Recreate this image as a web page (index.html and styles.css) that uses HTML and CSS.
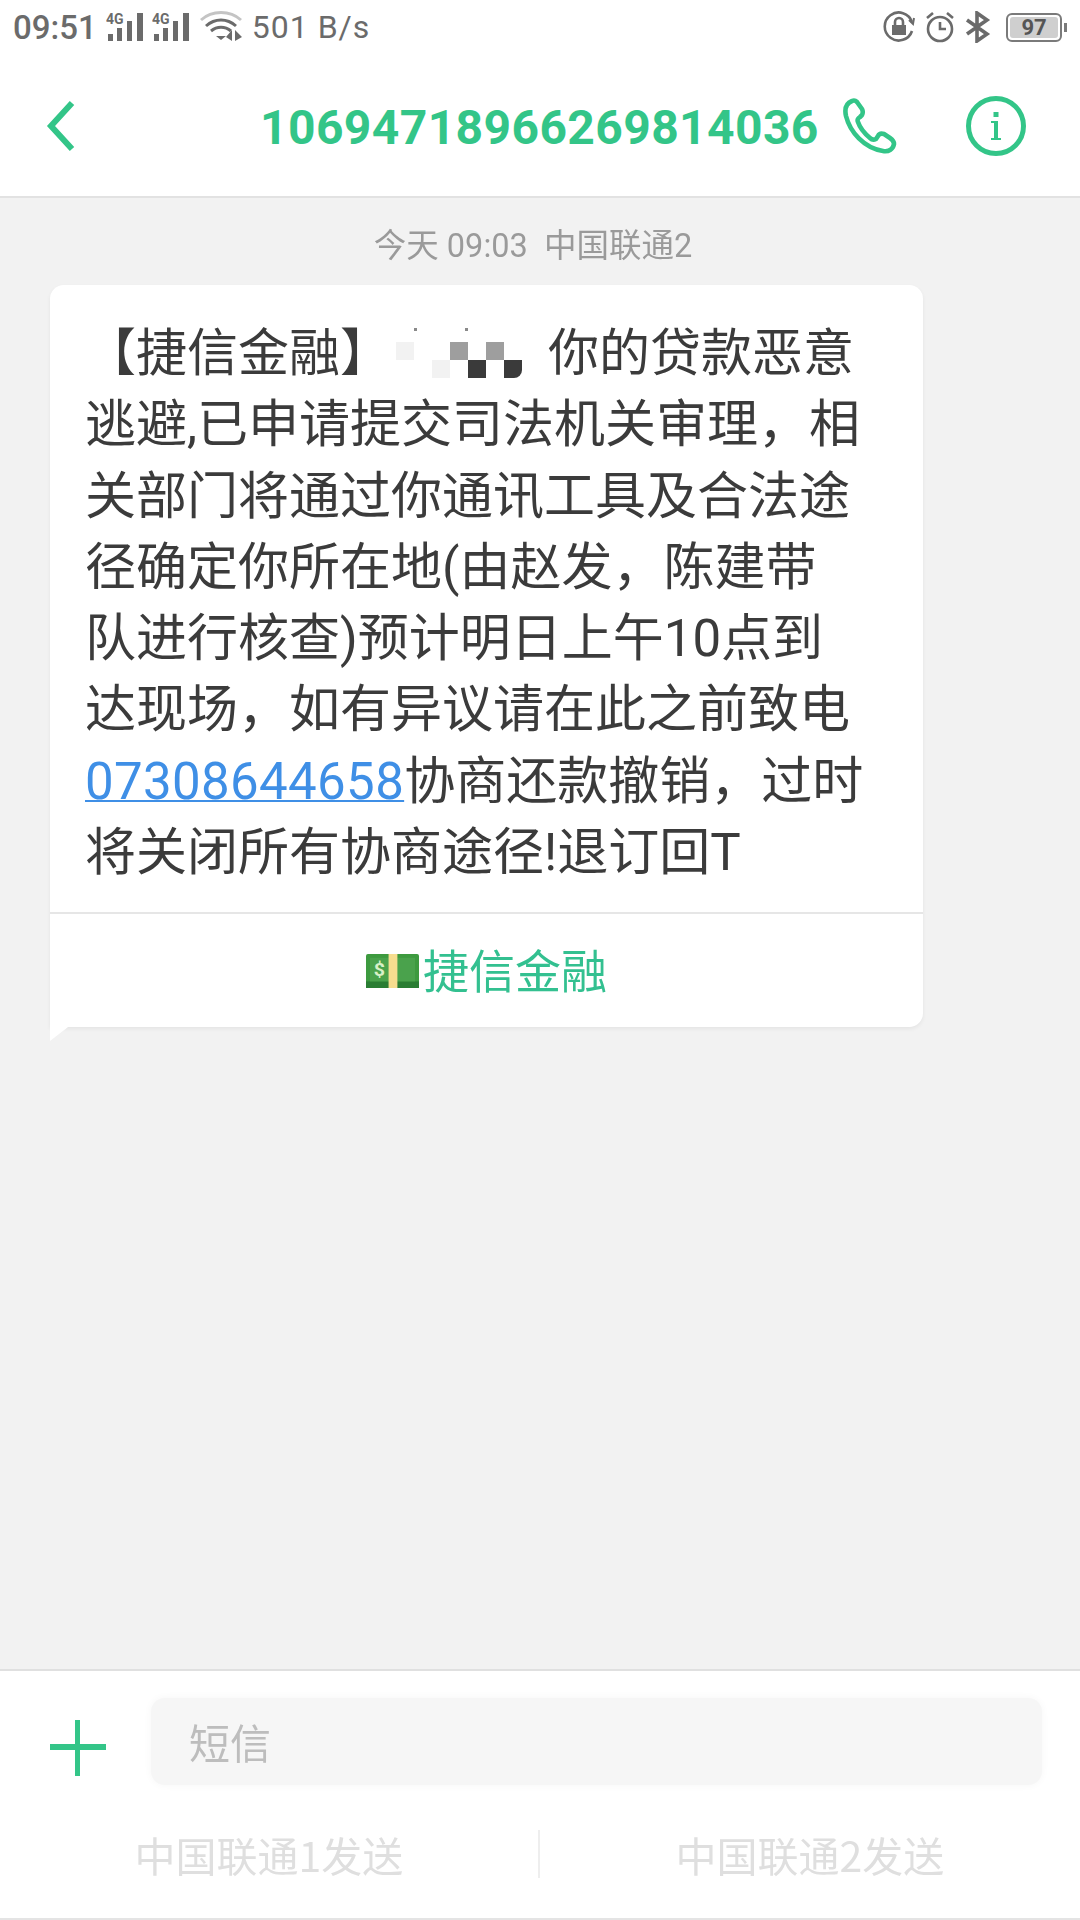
FILE: index.html
```html
<!DOCTYPE html>
<html lang="zh-CN">

<head>
    <meta charset="utf-8">
    <title>短信</title>
    <link rel="stylesheet" href="styles.css">
</head>

<body>
    <div class="phone">
        <div class="status-bar">
            <span class="clock">09:51</span>
            <svg class="signal" width="38" height="34" viewBox="0 0 38 34">
                <text x="0" y="14" class="net-label">4G</text>
                <rect x="2" y="24" width="5" height="7" />
                <rect x="11" y="18" width="5" height="13" />
                <rect x="21" y="11" width="5" height="20" />
                <rect x="31" y="3" width="6" height="28" />
            </svg>
            <svg class="signal" width="38" height="34" viewBox="0 0 38 34">
                <text x="0" y="14" class="net-label">4G</text>
                <rect x="2" y="24" width="5" height="7" />
                <rect x="11" y="18" width="5" height="13" />
                <rect x="21" y="11" width="5" height="20" />
                <rect x="31" y="3" width="6" height="28" />
            </svg>
            <svg class="wifi" width="44" height="32" viewBox="0 0 44 32">
                <path d="M1 9 C12 -1 30 -1 41 9" fill="none" stroke="#c4c4c4" stroke-width="3" />
                <path d="M6 15 C15 7 27 7 36 15" fill="none" stroke="#6b6b6b" stroke-width="3" />
                <path d="M11 20 C17 15 25 15 31 20" fill="none" stroke="#6b6b6b" stroke-width="3" />
                <path d="M16 25 L26 25 L21 29 Z" fill="#6b6b6b" />
                <path d="M32 19 L32 30 L26 26 Z M35 19 L35 30 L42 26 Z" fill="#6b6b6b" />
            </svg>
            <span class="speed">501 B/s</span>
            <span class="status-right">
                <svg width="32" height="32" viewBox="0 0 32 32" fill="none" stroke="#6b6b6b" stroke-width="2.6">
                    <path d="M29 20 A14 14 0 1 1 29 11" />
                    <path d="M26 9 L30 13 L31 7" stroke-width="2" />
                    <rect x="9" y="14" width="14" height="10" fill="#6b6b6b" stroke="none" />
                    <path d="M12 14 V11 A4 4 0 0 1 20 11 V14" />
                </svg>
                <svg width="30" height="32" viewBox="0 0 30 32" fill="none" stroke="#6b6b6b" stroke-width="2.6">
                    <circle cx="15" cy="18" r="12" />
                    <path d="M15 11 V18 H21" />
                    <path d="M2 7 L8 2 M22 2 L28 7" />
                </svg>
                <svg width="26" height="32" viewBox="0 0 26 32" fill="none" stroke="#6b6b6b" stroke-width="3.6">
                    <path d="M2 9 L22 23 L12 30 V2 L22 9 L2 23" />
                </svg>
                <span class="battery"><span class="battery-level">97</span></span>
            </span>
        </div>

        <div class="title-bar">
            <svg class="back" width="30" height="52" viewBox="0 0 30 52" fill="none" stroke="#33c588" stroke-width="6">
                <path d="M26 3 L5 26 L26 49" />
            </svg>
            <span class="title">10694718966269814036</span>
            <svg class="call" width="54" height="56" viewBox="0 0 54 56" fill="none" stroke="#33c588" stroke-width="4.6" stroke-linejoin="round">
                <path d="M9 3 C4 5 1 9 3 18 C7 34 21 50 40 53 C46 54 50 51 51 46 C51 43 50 42 47 40 L41 36 C38 35 36 36 35 38 L33 41 C31 42 29 42 27 40 C21 35 17 30 15 24 C14 22 15 20 17 19 L19 17 C20 15 20 13 19 11 L14 4 C12 2 11 2 9 3 Z" />
            </svg>
            <svg class="info" width="60" height="60" viewBox="0 0 60 60">
                <circle cx="30" cy="30" r="27.5" fill="none" stroke="#33c588" stroke-width="5" />
                <rect x="27.5" y="16" width="5" height="5" fill="#33c588" />
                <path d="M25 25 H32 V42 H35 V44 H25 V42 H28 V27 H25 Z" fill="#33c588" />
            </svg>
        </div>

        <div class="thread">
            <div class="sent-time">今天 09:03&nbsp;&nbsp;中国联通2</div>
            <div class="bubble">
                <div class="bubble-text">【捷信金融】<span class="mosaic"><i></i><i class="dot left"></i><i></i><i class="dot right"></i><i></i><i></i><i></i><i class="cell faint"></i><i></i><i></i><i class="cell grey"></i><i></i><i class="cell grey"></i><i></i><i></i><i></i><i class="cell faint"></i><i></i><i class="cell dark"></i><i></i><i class="cell dark end"></i></span>你的贷款恶意<br>逃避,已申请提交司法机关审理，相<br>关部门将通过你通讯工具及合法途<br>径确定你所在地(由赵发，陈建带<br>队进行核查)预计明日上午10点到<br>达现场，如有异议请在此之前致电<br><a class="phone-link">07308644658</a>协商还款撤销，过时<br>将关闭所有协商途径!退订回T</div>
                <div class="bubble-action">
                    <svg class="money" width="53" height="34" viewBox="0 0 54 36" preserveAspectRatio="none">
                        <rect x="0" y="0" width="54" height="36" rx="2" fill="#3d9a3f" />
                        <rect x="0" y="29" width="54" height="7" fill="#2a7d33" />
                        <rect x="4" y="4" width="46" height="25" fill="#4aa24c" />
                        <rect x="23" y="0" width="9" height="36" fill="#f6dd8f" />
                        <text x="8" y="23" class="money-sign">$</text>
                    </svg>
                    <span class="action-label">捷信金融</span>
                </div>
            </div>
        </div>

        <div class="composer">
            <div class="input-row">
                <svg class="plus" width="56" height="56" viewBox="0 0 56 56" fill="#33c588">
                    <rect x="0" y="24" width="56" height="6" />
                    <rect x="25" y="0" width="5" height="56" />
                </svg>
                <div class="input-box">短信</div>
            </div>
            <div class="send-row">
                <span class="send-btn">中国联通1发送</span>
                <span class="send-btn">中国联通2发送</span>
            </div>
        </div>
    </div>
</body>

</html>
```

FILE: styles.css
```css
* {
    box-sizing: border-box;
}

body {
    margin: 0;
    font-family: "Noto Sans CJK SC", Roboto, sans-serif;
    background-color: #f2f2f2;
}

/* The screenshot is soft, so the whole page gets a slight blur */
.phone {
    width: 1080px;
    height: 1920px;
    display: flex;
    flex-direction: column;
    overflow: hidden;
    filter: blur(0.4px);
}

/* Status bar */
.status-bar {
    height: 58px;
    background-color: #fff;
    display: flex;
    align-items: center;
    padding: 0 18px 4px 13px;
    color: #6b6b6b;
    font-family: Roboto, sans-serif;
    font-size: 32px;
}

.clock {
    font-size: 33px;
    font-weight: 500;
    margin-right: 9px;
}

.signal {
    fill: #6b6b6b;
    margin-right: 8px;
}

.net-label {
    font-family: Roboto, sans-serif;
    font-size: 14px;
    font-weight: 700;
}

.wifi {
    margin: 0 8px 0 2px;
}

.speed {
    letter-spacing: 1px;
}

.status-right {
    margin-left: auto;
    display: flex;
    align-items: center;
    gap: 10px;
}

.battery {
    width: 56px;
    height: 29px;
    margin-left: 5px;
    border: 2px solid #7a7a7a;
    border-radius: 6px;
    padding: 2px;
    display: flex;
    position: relative;
}

.battery::after {
    content: "";
    position: absolute;
    right: -7px;
    top: 8px;
    width: 3px;
    height: 9px;
    background-color: #7a7a7a;
}

.battery-level {
    flex: 1;
    background-color: #cfcfcf;
    border-radius: 3px;
    color: #555;
    font-size: 22px;
    font-weight: 700;
    line-height: 21px;
    text-align: center;
}

/* Title bar */
.title-bar {
    height: 140px;
    background-color: #fff;
    border-bottom: 2px solid #e2e2e2;
    display: flex;
    align-items: center;
    padding: 0 0 3px 46px;
}

.back {
    margin-right: 184px;
}

.title {
    color: #33c588;
    font-family: Roboto, sans-serif;
    font-size: 48px;
    font-weight: 700;
    letter-spacing: 0.4px;
    margin: 3px 24px 0 0;
}

.call {
    margin-right: 69px;
}

/* Messages */
.thread {
    flex: 1;
    padding: 0 157px 0 50px;
}

.sent-time {
    color: #9a9a9a;
    font-family: Roboto, "Noto Sans CJK SC", sans-serif;
    font-size: 32.5px;
    line-height: 44px;
    height: 87px;
    padding: 26px 14px 0 0;
    margin: 0 -157px 0 -50px;
    text-align: center;
}

.bubble {
    background-color: #fff;
    border-radius: 14px 14px 14px 0;
    box-shadow: 0 2px 4px rgba(0, 0, 0, 0.06);
    position: relative;
}

.bubble::after {
    content: "";
    position: absolute;
    left: 0;
    bottom: -14px;
    border-top: 14px solid #fff;
    border-right: 18px solid transparent;
}

.bubble-text {
    color: #3b3b3b;
    font-family: Roboto, "Noto Sans CJK SC", sans-serif;
    font-size: 51px;
    line-height: 71.3px;
    padding: 33px 20px 24px 35px;
    white-space: nowrap;
}

/* Blurred-out customer name */
.mosaic {
    display: inline-grid;
    grid-template-columns: repeat(7, 18px);
    grid-template-rows: 14px 18px 18px;
    margin: 10px 26px 0 5px;
    vertical-align: top;
}

.cell.faint {
    background-color: #f2f2f2;
}

.cell.grey {
    background-color: #9e9e9e;
}

.cell.dark {
    background-color: #3a3a3a;
}

.cell.end {
    border-radius: 0 0 8px 0;
}

.dot {
    width: 3px;
    height: 3px;
    background-color: #8a8a8a;
}

.dot.right {
    justify-self: end;
}

.phone-link {
    color: #3f8fe6;
    letter-spacing: 0.35px;
    text-decoration: underline;
    text-decoration-thickness: 2px;
}

.bubble-action {
    height: 115px;
    border-top: 2px solid #e6e6e6;
    display: flex;
    align-items: center;
    justify-content: center;
    gap: 4px;
    color: #33c090;
    font-size: 46px;
}

.action-label {
    margin-top: -6px;
}

.money-sign {
    fill: #d8f0c8;
    font-family: Roboto, sans-serif;
    font-size: 20px;
    font-weight: 700;
}

/* Input area */
.composer {
    height: 251px;
    background-color: #fff;
    border-top: 2px solid #e0e0e0;
    border-bottom: 2px solid #e4e4e4;
}

.input-row {
    display: flex;
    align-items: center;
    padding: 27px 38px 0 50px;
    gap: 45px;
}

.plus {
    margin-top: 12px;
}

.input-box {
    flex: 1;
    height: 87px;
    background-color: #f6f6f6;
    border-radius: 14px;
    box-shadow: 0 0 8px #f6f6f6;
    color: #bdbdbd;
    font-size: 41px;
    line-height: 87px;
    padding-left: 38px;
}

.send-row {
    display: grid;
    grid-template-columns: 1fr 1fr;
    margin-top: 45px;
}

.send-btn {
    color: #dfdfdf;
    font-size: 41px;
    line-height: 48px;
    text-align: center;
}

.send-btn:first-child {
    border-right: 2px solid #eeeeee;
}
```
